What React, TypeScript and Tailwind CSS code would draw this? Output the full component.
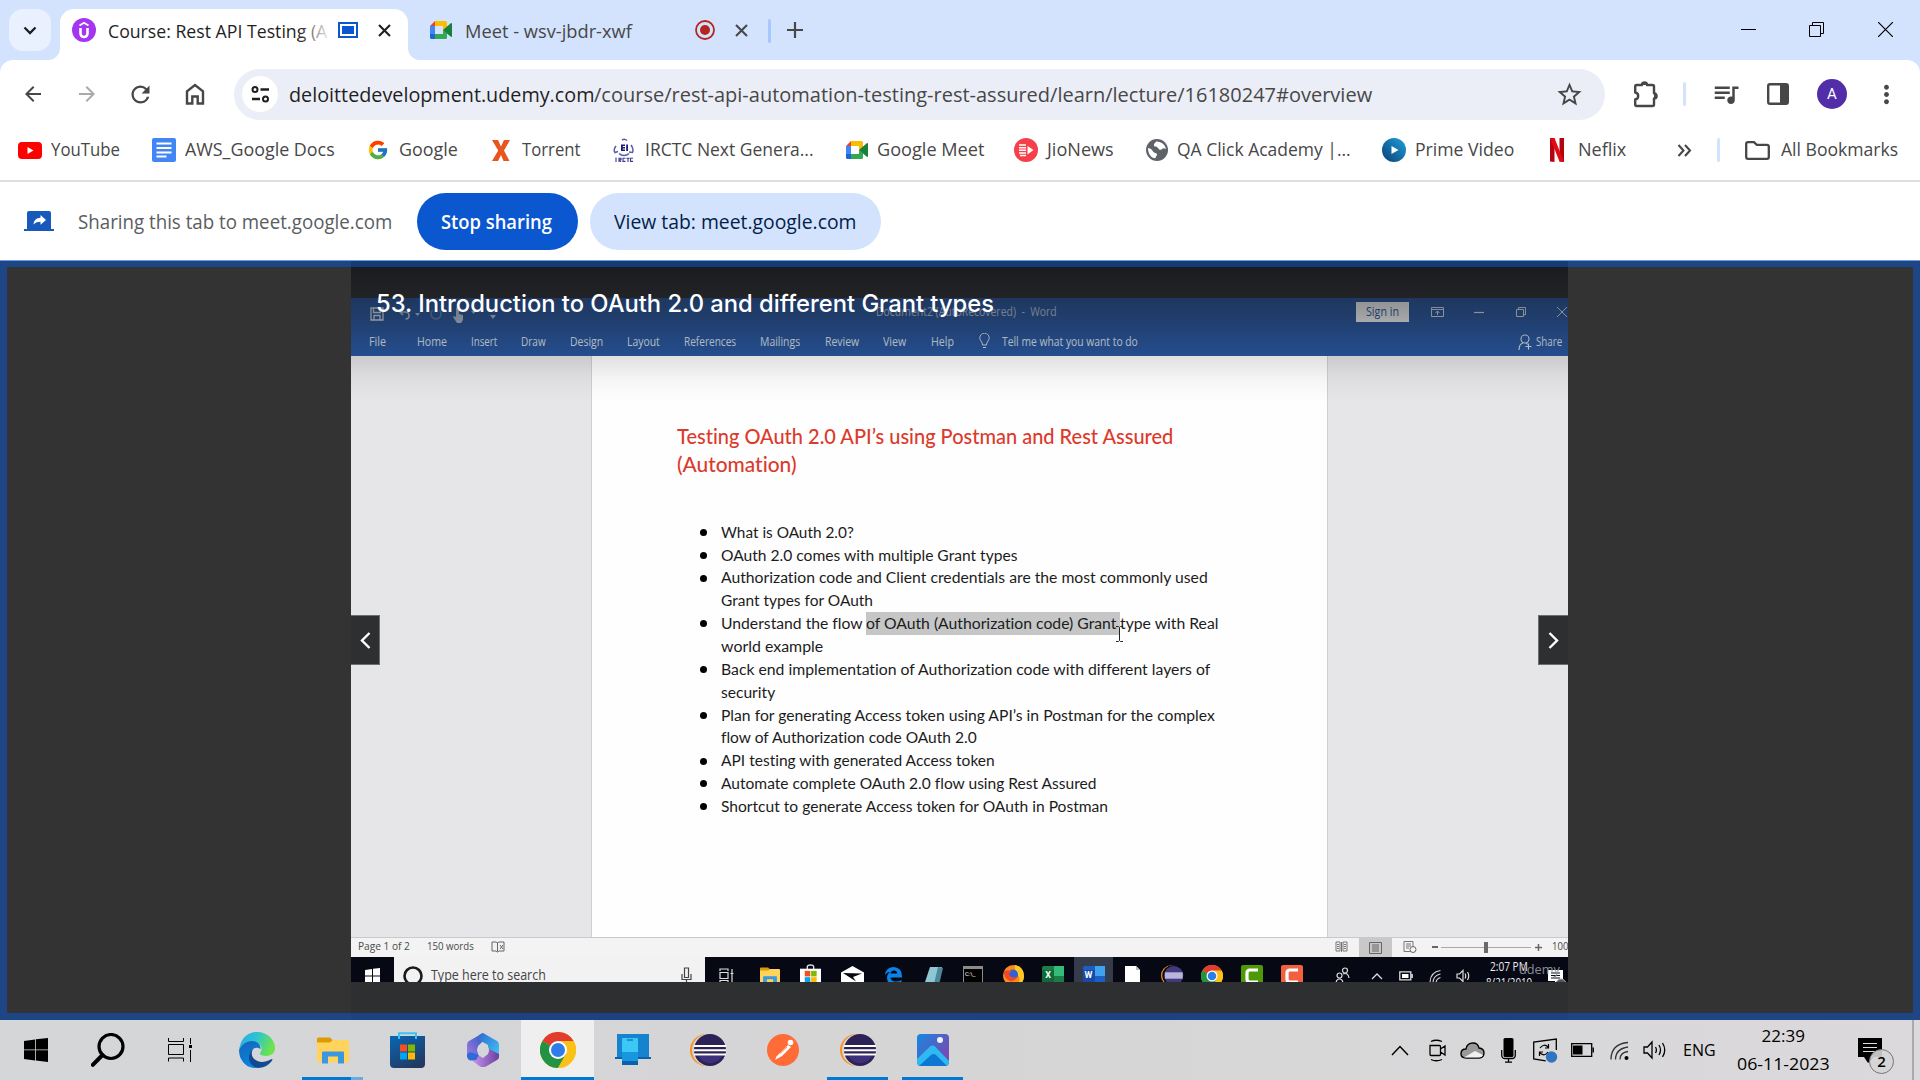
import React, { useLayoutEffect, useRef, useState } from "react";
import { FcGoogle } from "react-icons/fc";
import {
  MdArrowBack,
  MdArrowForward,
  MdRefresh,
  MdMoreVert,
  MdQueueMusic,
  MdStarBorder,
} from "react-icons/md";

type Kids = { children?: React.ReactNode; className?: string };

/* Single line of text stretched or condensed to a fixed advance width. */
function Fit({ w, className = "", children }: Kids & { w: number }) {
  const ref = useRef<HTMLSpanElement>(null);
  const [scale, setScale] = useState(1);
  useLayoutEffect(() => {
    if (ref.current && ref.current.offsetWidth) setScale(w / ref.current.offsetWidth);
  }, [w]);
  return (
    <span className={"inline-block shrink-0 " + className} style={{ width: w }}>
      <span
        ref={ref}
        className="inline-block origin-left whitespace-pre"
        style={{ transform: `scaleX(${scale})` }}
      >
        {children}
      </span>
    </span>
  );
}

function Svg({
  w,
  h,
  vb,
  className = "",
  children,
}: Kids & { w: number; h: number; vb?: string }) {
  return (
    <svg
      width={w}
      height={h}
      viewBox={vb ?? `0 0 ${w} ${h}`}
      fill="none"
      className={"block shrink-0 " + className}
    >
      {children}
    </svg>
  );
}

/* ---------- logos ---------- */

const MeetLogo = () => (
  <Svg w={22} h={18} vb="0 0 22 18">
    <path d="M0 5 5 0v5z" fill="#ea4335" />
    <path d="M5 0h10.5Q17 0 17 1.500V7l-4 3V5H5z" fill="#fbbc04" />
    <path d="M0 5h5v8H0z" fill="#4285f4" />
    <path d="M0 13h5v5H1.500Q0 18 0 16.500z" fill="#1967d2" />
    <path d="M5 13h8V9l4 3v4.500q0 1.500-1.500 1.500H5z" fill="#34a853" />
    <path d="m13 9 7.500-6.500Q22 1.500 22 3v12q0 1.500-1.500.500z" fill="#188038" />
  </Svg>
);

const Chrome = ({ s }: { s: number }) => (
  <Svg w={s} h={s} vb="0 0 36 36">
    <circle cx="18" cy="18" r="18" fill="#fbc116" />
    <path d="M18 18 2.400 9A18 18 0 0 1 33.600 9z" fill="#e33b2e" />
    <path d="M2.400 9A18 18 0 0 0 18 36l7.800-13.500L18 18z" fill="#229342" />
    <path d="M18 9h15.600A18 18 0 0 1 18 36l7.800-13.500z" fill="#fbc116" />
    <circle cx="18" cy="18" r="9" fill="#fff" />
    <circle cx="18" cy="18" r="7" fill="#2f7de9" />
  </Svg>
);

const Eclipse = ({ s }: { s: number }) => (
  <Svg w={s} h={s} vb="0 0 36 36">
    <circle cx="16" cy="18" r="16" fill="#f7941e" />
    <circle cx="18" cy="18" r="16" fill="#d5d6d8" />
    <circle cx="20" cy="18" r="16" fill="#2c2255" />
    <path d="M8 24h24c-3 5-7 7-12 7s-9-2-12-7z" fill="#43388a" opacity=".7" />
    <path d="M4 13h32v2H4zM4 17.200h32v2H4zM4 21.400h32v2H4z" fill="#fff" />
  </Svg>
);

const Explorer = ({ w, h }: { w: number; h: number }) => (
  <Svg w={w} h={h} vb="0 0 32 26">
    <path d="M0 1.500Q0 0 1.500 0H13l3 3-3 3H0z" fill="#dd9a05" />
    <path d="M0 5h13l3-2.500h14.500Q32 2.500 32 4v19.500q0 1.500-1.500 1.500h-29Q0 25 0 23.500z" fill="#ffd35c" />
    <path d="M5 26V15q0-1 1-1h20q1 0 1 1v11h-6v-7H11v7z" fill="#3a97e0" />
  </Svg>
);

const StoreTiles = () => (
  <>
    <path d="M10 12.500h7v7h-7z" fill="#f25022" />
    <path d="M18 12.500h7v7h-7z" fill="#7fba00" />
    <path d="M10 20.500h7v7h-7z" fill="#00a4ef" />
    <path d="M18 20.500h7v7h-7z" fill="#ffb900" />
  </>
);

/* ---------- browser chrome ---------- */

const Close = ({ className = "" }: Kids) => (
  <Svg w={13} h={13} className={className}>
    <path d="m1 1 11 11M12 1 1 12" stroke="currentColor" strokeWidth="2.100" />
  </Svg>
);

function TabStrip() {
  return (
    <div className="flex h-[60px] bg-[#d3e3fd] pl-[9px] pt-[9px] text-[#1f1f1f]">
      <div className="flex size-[42px] items-center justify-center rounded-[14px] bg-[#e9f1fe]">
        <Svg w={14} h={9}>
          <path d="m1.500 1.500 5.500 5.500 5.500-5.500" stroke="#1f1f1f" strokeWidth="2.300" />
        </Svg>
      </div>

      <div className="relative ml-[9px] flex h-[51px] w-[348px] rounded-t-[14px] bg-white pl-3">
        <span className="absolute -left-3 bottom-0 size-3 bg-white">
          <span className="block size-3 rounded-br-[12px] bg-[#d3e3fd]" />
        </span>
        <span className="absolute -right-3 bottom-0 size-3 bg-white">
          <span className="block size-3 rounded-bl-[12px] bg-[#d3e3fd]" />
        </span>
        <Svg w={24} h={24} className="mt-[9px]">
          <circle cx="12" cy="12" r="12" fill="#a435f0" />
          <path d="M7.500 7.500 12 4.800l4.500 2.700" stroke="#fff" strokeWidth="1.900" />
          <path d="M8.500 10v5.500a3.500 3.500 0 0 0 7 0V10" stroke="#fff" strokeWidth="2.600" />
        </Svg>
        <div className="relative ml-3 h-[42px] w-[219px] pt-[10px] text-[17.300px] leading-[26px]">
          <Fit w={219}>Course: Rest API Testing (A</Fit>
          <span className="absolute -right-1 top-0 h-10 w-8 bg-gradient-to-r from-transparent to-white" />
        </div>
        <Svg w={20} h={16} className="ml-[11px] mt-[13px]">
          <path d="M1 1h18v14H1z" stroke="#0b57d0" strokeWidth="2" />
          <path d="M4 4h12v8H4z" fill="#0b57d0" />
        </Svg>
        <Close className="ml-[20px] mt-[15px]" />
      </div>

      <div className="ml-[22px] mt-3">
        <MeetLogo />
      </div>
      <Fit w={167} className="ml-[13px] mt-[10px] text-[17.300px] leading-[26px] text-[#474747]">
        Meet - wsv-jbdr-xwf
      </Fit>
      <Svg w={20} h={20} className="ml-[63px] mt-[11px]">
        <circle cx="10" cy="10" r="9" stroke="#b3261e" strokeWidth="1.800" />
        <circle cx="10" cy="10" r="5" fill="#b3261e" />
      </Svg>
      <Close className="ml-[20px] mt-[15px] text-[#474747]" />
      <span className="ml-[20px] mt-[10px] h-6 w-[3px] rounded bg-[#a8c7fa]" />
      <Svg w={16} h={16} className="ml-[16px] mt-[13px]">
        <path d="M8 0v16M0 8h16" stroke="#474747" strokeWidth="2.200" />
      </Svg>
      <div className="ml-auto mr-[27px] flex text-black">
        <Svg w={15} h={15} className="mt-[13px]">
          <path d="M0 7.500h15" stroke="currentColor" />
        </Svg>
        <Svg w={15} h={15} className="ml-[53px] mt-[13px]">
          <path d="M.5 3.500h11v11H.5zM3.500 3.500v-3h11v11h-3" stroke="currentColor" />
        </Svg>
        <Svg w={15} h={15} className="ml-[54px] mt-[13px]">
          <path d="m0 0 15 15M15 0 0 15" stroke="currentColor" strokeWidth="1.200" />
        </Svg>
      </div>
    </div>
  );
}

function Toolbar() {
  return (
    <div className="h-[60px] bg-[#d3e3fd]">
      <div className="flex h-[60px] items-center rounded-t-[13px] bg-white pl-[21px] pt-[8px] text-[#474747]">
        <MdArrowBack className="size-6 shrink-0" />
        <MdArrowForward className="ml-[30px] size-6 shrink-0 text-[#aaaaaa]" />
        <MdRefresh className="ml-[28px] size-[27px] shrink-0" />
        <Svg w={20} h={22} className="ml-[31px]">
          <path d="M2 20.500V8.300L10 2l8 6.300v12.200h-5.300v-7H7.300v7z" stroke="currentColor" strokeWidth="2.400" />
        </Svg>
        <div className="ml-[29px] flex h-[51px] w-[1371px] shrink-0 items-center rounded-full bg-[#ebeef7] pl-2">
          <span className="flex size-9 shrink-0 items-center justify-center rounded-full bg-white">
            <Svg w={19} h={17}>
              <circle cx="4" cy="3.500" r="2.500" stroke="#1f1f1f" strokeWidth="2" />
              <path d="M9.500 3.500H18M1 13h8" stroke="#1f1f1f" strokeWidth="2.300" />
              <circle cx="14.500" cy="13" r="2.500" stroke="#1f1f1f" strokeWidth="2" />
            </Svg>
          </span>
          <Fit w={305} className="ml-[11px] text-[20.300px] leading-[30px] text-[#1f1f1f]">
            deloittedevelopment.udemy.com
          </Fit>
          <Fit w={778} className="text-[20.300px] leading-[30px]">
            /course/rest-api-automation-testing-rest-assured/learn/lecture/16180247#overview
          </Fit>
          <MdStarBorder className="ml-[183px] size-[29px] shrink-0" />
        </div>
        <Svg w={26} h={27} className="ml-[28px]">
          <path
            d="M2.200 5.500q0-1.500 1.500-1.500H9a2.500 2.500 0 0 1 5 0h5.500q1.500 0 1.500 1.500v6.800a2.600 2.600 0 0 1 0 5.200v6q0 1.500-1.500 1.500H3.700q-1.500 0-1.500-1.500V18.500c4-.500 4-6.500 0-7z"
            stroke="currentColor"
            strokeWidth="2.400"
            strokeLinejoin="round"
          />
          <path d="M9 4a2.600 2.600 0 0 1 5 0zM21 12a2.600 2.600 0 0 1 0 5.500z" fill="currentColor" />
        </Svg>
        <span className="ml-[24px] h-6 w-[3px] rounded bg-[#d3e3fd]" />
        <MdQueueMusic className="ml-[25px] size-[30px] shrink-0" />
        <Svg w={22} h={22} className="ml-[26px]">
          <path d="M1.200 3q0-1.800 1.800-1.800h16q1.800 0 1.800 1.800v16q0 1.800-1.800 1.800H3q-1.800 0-1.800-1.800z" stroke="currentColor" strokeWidth="2.400" />
          <path d="M13 1h8v20h-8z" fill="currentColor" />
        </Svg>
        <span className="ml-[28px] flex size-[30px] shrink-0 items-center justify-center rounded-full bg-[#512da8] font-[Roboto] text-[15px] text-white">
          A
        </span>
        <MdMoreVert className="ml-[25px] size-[29px] shrink-0" />
      </div>
    </div>
  );
}

const BM = ({ icon, gap, ml, w, label }: { icon: React.ReactNode; gap: string; ml: string; w: number; label: string }) => (
  <div className={"flex shrink-0 items-center " + ml}>
    {icon}
    <Fit w={w} className={gap}>
      {label}
    </Fit>
  </div>
);

function Bookmarks() {
  return (
    <div className="flex h-[62px] items-center border-b-2 border-[#dedfe0] bg-white text-[17.300px] leading-[26px] text-[#474747]">
      <BM
        ml="ml-[18px]"
        gap="ml-[9px]"
        w={69}
        label="YouTube"
        icon={
          <Svg w={24} h={17}>
            <rect width="24" height="17" rx="4" fill="#f00" />
            <path d="m9.500 5 6 3.500-6 3.500z" fill="#fff" />
          </Svg>
        }
      />
      <BM
        ml="ml-[32px]"
        gap="ml-[9px]"
        w={150}
        label="AWS_Google Docs"
        icon={
          <Svg w={24} h={24}>
            <rect width="24" height="24" rx="2" fill="#4285f4" />
            <path d="M4.500 5.500h15M4.500 10h15M4.500 14.500h15M4.500 18.500h10" stroke="#fff" strokeWidth="2" />
          </Svg>
        }
      />
      <BM ml="ml-[32px]" gap="ml-[10px]" w={59} label="Google" icon={<FcGoogle className="size-[22px]" />} />
      <BM
        ml="ml-[34px]"
        gap="ml-[12px]"
        w={59}
        label="Torrent"
        icon={
          <Svg w={18} h={21}>
            <path d="M0 0h6l3 6.500L12 0h6l-6 10.500L17.500 21h-6L9 15l-3 6H0l6.200-10.500z" fill="#e8551f" />
          </Svg>
        }
      />
      <BM
        ml="ml-[32px]"
        gap="ml-[10px]"
        w={169}
        label="IRCTC Next Genera..."
        icon={
          <Svg w={22} h={24}>
            <path d="M9 2a4 4 0 0 1 5 .5M3 8q-3 4-1 6.500l3-1M18 7q3 4 1.500 7.500L16 14M6 15.500q2 2 5 2t5-2" stroke="#5a5ab0" strokeWidth="1.500" />
            <path d="M8 6.500h4v1.600H9.800v1H12v1.400H9.800v1H12V13H8zM13.200 6.500h1.800V13h-1.800z" fill="#1d1d7a" />
            <path d="M3 19.500V24M6 24v-3.800h2v1.600H6.500L8 24M12.500 20.200H10v3.200h2.500M13.500 20.200h3M15 20.200V24M20 20.200h-2.500v3.200H20" stroke="#3a3a90" strokeWidth="1.100" />
          </Svg>
        }
      />
      <BM ml="ml-[32px]" gap="ml-[9px]" w={107} label="Google Meet" icon={<MeetLogo />} />
      <BM
        ml="ml-[30px]"
        gap="ml-[9px]"
        w={67}
        label="JioNews"
        icon={
          <Svg w={24} h={24}>
            <circle cx="12" cy="12" r="12" fill="#f5404b" />
            <path d="M5 7h7M5 9.700h7M5 12.300h7M5 15h7M6 17.500h6" stroke="#fff" strokeWidth="1.500" />
            <path d="m13.500 8 6 4-6 4.500z" fill="#fff" />
          </Svg>
        }
      />
      <BM
        ml="ml-[32px]"
        gap="ml-[9px]"
        w={174}
        label="QA Click Academy |..."
        icon={
          <Svg w={22} h={22}>
            <circle cx="11" cy="11" r="11" fill="#5f6368" />
            <path d="M2 9c3 .5 4 1.500 5 3.500s4 1 4 3-1.500 1.500-1.500 3.800C5 19 2 15 2 9zM10 2.500c-1 2-2.500 2-2 4s3 .5 4 2.500 3 2.500 4 1 2.500-.5 4 0c-.5-4-5-8-10-7.500z" fill="#fff" />
          </Svg>
        }
      />
      <BM
        ml="ml-[31px]"
        gap="ml-[9px]"
        w={99}
        label="Prime Video"
        icon={
          <Svg w={24} h={24}>
            <defs>
              <linearGradient id="pv" x1="1" y1="0" x2="0" y2="1">
                <stop offset="0" stopColor="#1fa0dc" />
                <stop offset="1" stopColor="#0a3f74" />
              </linearGradient>
            </defs>
            <circle cx="12" cy="12" r="12" fill="url(#pv)" />
            <path d="m9.500 8 7 4-7 4z" fill="#fff" />
          </Svg>
        }
      />
      <BM
        ml="ml-[36px]"
        gap="ml-[14px]"
        w={48}
        label="Neflix"
        icon={
          <Svg w={14} h={24}>
            <path d="M0 0h4.500v24L0 23.500zM9.500 0H14v24l-4.500-.5z" fill="#b1060f" />
            <path d="M0 0h4.500L14 24l-4.500-.5z" fill="#e50914" />
          </Svg>
        }
      />
      <Svg w={15} h={13} className="ml-[51px]">
        <path d="m1.500 1 5 5.500-5 5.500M8 1l5 5.500L8 12" stroke="#474747" strokeWidth="2.100" />
      </Svg>
      <span className="ml-[25px] h-6 w-[3px] rounded bg-[#d3e3fd]" />
      <Svg w={25} h={19} className="ml-[25px]">
        <path d="M1.200 3q0-1.800 1.800-1.800h6l2.800 2.600H22q1.800 0 1.800 1.800V16q0 1.800-1.800 1.800H3Q1.200 17.800 1.200 16z" stroke="#474747" strokeWidth="2.300" />
      </Svg>
      <Fit w={117} className="ml-[11px]">
        All Bookmarks
      </Fit>
    </div>
  );
}

function ShareBar() {
  return (
    <div className="flex h-[78px] items-center bg-white pl-6 text-[19.200px] leading-[28px]">
      <Svg w={30} h={20}>
        <path d="M3 2q0-2 2-2h20q2 0 2 2v16h3v2H0v-2h3z" fill="#185abc" />
        <path d="M9.500 13.500c.5-4.500 3-6.300 7-6.700V4l5.500 5-5.500 4.800v-3c-3 0-5 .7-7 2.700z" fill="#fff" />
      </Svg>
      <Fit w={314} className="ml-6 mt-px text-[#5a5d61]">
        Sharing this tab to meet.google.com
      </Fit>
      <div className="ml-[25px] flex h-[57px] w-[161px] items-center rounded-full bg-[#0b57d0] pl-6 pt-[2px] font-semibold text-white">
        <Fit w={111}>Stop sharing</Fit>
      </div>
      <div className="ml-3 flex h-[57px] w-[291px] items-center rounded-full bg-[#d3e3fd] pl-6 pt-[2px] font-medium text-[#041e49]">
        <Fit w={242}>View tab: meet.google.com</Fit>
      </div>
    </div>
  );
}

/* ---------- recorded Word window ---------- */

const ribbon: [string, string, number][] = [
  ["File", "ml-[18px]", 17],
  ["Home", "ml-[31px]", 30],
  ["Insert", "ml-[24px]", 26],
  ["Draw", "ml-[24px]", 25],
  ["Design", "ml-[24px]", 33],
  ["Layout", "ml-[24px]", 33],
  ["References", "ml-[24px]", 52],
  ["Mailings", "ml-[24px]", 40],
  ["Review", "ml-[25px]", 34],
  ["View", "ml-[24px]", 23],
  ["Help", "ml-[25px]", 23],
];

function WordHeader() {
  return (
    <div className="flex h-[58px] flex-col bg-[#2756a0] text-[12px] text-[#dfe6f2]">
      <div className="flex h-7 items-center">
        <Svg w={14} h={14} className="ml-[19px] mt-[4px]">
          <path d="M1 1h12v12H1zM3.500 1v4.500h7V1M4 13V8.500h6V13" stroke="currentColor" strokeWidth="1.300" />
        </Svg>
        <Svg w={22} h={12} className="ml-[14px] mt-[4px] opacity-80">
          <path d="M5 1 2 4l3 3M2 4h5q4 0 4 3.500T7.500 11" stroke="currentColor" strokeWidth="1.600" />
          <path d="m17 5 2.500 3L22 5z" fill="currentColor" />
        </Svg>
        <Svg w={12} h={13} className="ml-[10px] mt-[4px] opacity-30">
          <path d="M9 2a5 5 0 1 1-6 0" stroke="currentColor" strokeWidth="1.500" />
        </Svg>
        <Svg w={24} h={17} className="ml-[10px] mt-[5px] opacity-80">
          <path d="M4 2q2-2 3 0v6l4 1v5l-2 3H5L1 11l1-1 2 1z" fill="currentColor" />
          <path d="m19 5 2.500 3L24 5z" fill="currentColor" />
        </Svg>
        <Svg w={6} h={5} className="ml-[14px] mt-[8px] opacity-80">
          <path d="M0 1h6L3 5z" fill="currentColor" />
        </Svg>
        <Fit w={181} className="ml-[380px] opacity-80">
          Document2 (AutoRecovered)  -  Word
        </Fit>
        <span className="ml-[299px] flex h-[20px] w-[53px] items-center justify-center bg-white text-[#2756a0]">
          <Fit w={33}>Sign in</Fit>
        </span>
        <Svg w={13} h={10} className="ml-[22px]">
          <path d="M.5.500h12v9H.5zM0 2.500h13M6.500 8V4M4.500 6l2-2 2 2" stroke="currentColor" />
        </Svg>
        <Svg w={10} h={10} className="ml-[30px]">
          <path d="M0 5.500h10" stroke="currentColor" strokeWidth="1.200" />
        </Svg>
        <Svg w={10} h={10} className="ml-[32px]">
          <path d="M.5 2.500h7v7h-7zM2.500 2V.5h7v7H8" stroke="currentColor" />
        </Svg>
        <Svg w={10} h={10} className="ml-[31px]">
          <path d="m0 0 10 10M10 0 0 10" stroke="currentColor" />
        </Svg>
      </div>
      <div className="flex h-[30px] items-center pt-[1px]">
        {ribbon.map(([t, ml, w]) => (
          <Fit key={t} w={w} className={ml}>
            {t}
          </Fit>
        ))}
        <Svg w={11} h={17} className="ml-[25px]">
          <path d="M3.500 12q0-2-1.500-4a4.700 4.700 0 1 1 7 0Q7.500 10 7.500 12zM4 14.500h3" stroke="currentColor" />
        </Svg>
        <Fit w={136} className="ml-[12px]">
          Tell me what you want to do
        </Fit>
        <Svg w={14} h={16} className="ml-[380px]">
          <circle cx="7" cy="5" r="4" stroke="currentColor" strokeWidth="1.100" />
          <path d="M1 16q0-6 4-7M8 9.500q1.500 0 2.500 1.500M10.500 9.500v6M7.500 12.500h6" stroke="currentColor" strokeWidth="1.100" />
        </Svg>
        <Fit w={26} className="ml-[4px]">
          Share
        </Fit>
      </div>
    </div>
  );
}

const lines: { t: string; w: number; b?: boolean }[] = [
  { t: "What is OAuth 2.0?", w: 133, b: true },
  { t: "OAuth 2.0 comes with multiple Grant types", w: 296, b: true },
  { t: "Authorization code and Client credentials are the most commonly used", w: 487, b: true },
  { t: "Grant types for OAuth", w: 152 },
  { t: "", w: 0, b: true },
  { t: "world example", w: 102 },
  { t: "Back end implementation of Authorization code with different layers of", w: 489, b: true },
  { t: "security", w: 54 },
  { t: "Plan for generating Access token using API’s in Postman for the complex", w: 494, b: true },
  { t: "flow of Authorization code OAuth 2.0", w: 256 },
  { t: "API testing with generated Access token", w: 274, b: true },
  { t: "Automate complete OAuth 2.0 flow using Rest Assured", w: 376, b: true },
  { t: "Shortcut to generate Access token for OAuth in Postman", w: 387, b: true },
];

function WordDocument() {
  return (
    <div className="flex h-[581px] bg-[#e6e6e8]">
      <div className="ml-[240px] w-[737px] border-x border-[#cfcfd0] bg-[#fefefe] pt-[66px] font-[Lato] [font-variant-ligatures:none]">
        <div className="flex flex-col pl-[85px] text-[20.500px] font-medium leading-[28px] text-[#dc3a2c]">
          <Fit w={496}>Testing OAuth 2.0 API’s using Postman and Rest Assured</Fit>
          <Fit w={119}>(Automation)</Fit>
        </div>
        <div className="mt-[43px] text-[15.600px] text-[#1c1c1c]">
          {lines.map((l, i) => (
            <div key={i} className="flex h-[22.870px] items-center">
              <span className={l.b ? "ml-[108px] size-[7px] rounded-full bg-black" : "ml-[108px] size-[7px]"} />
              {l.t ? (
                <Fit w={l.w} className="ml-[14px]">
                  {l.t}
                </Fit>
              ) : (
                <>
                  <Fit w={142} className="ml-[14px]">
                    Understand the flow
                  </Fit>
                  <span className="relative ml-[3px] flex h-[23px] w-[254px] items-center bg-[#c6c6c7]">
                    <Fit w={250}>of OAuth (Authorization code) Grant</Fit>
                    <Svg w={7} h={16} className="absolute -right-[3px] top-[14px]">
                      <path d="M0 .5h2.500l1 1 1-1H7M3.500 1.500v13M0 15.500h2.500l1-1 1 1H7" stroke="#222" />
                    </Svg>
                  </span>
                  <Fit w={98}>type with Real</Fit>
                </>
              )}
            </div>
          ))}
        </div>
      </div>
    </div>
  );
}

function WordStatus() {
  return (
    <div className="flex h-5 shrink-0 items-center border-t border-[#c9c9c9] bg-[#f3f3f3] pb-px text-[11.300px] text-[#4a4a4a]">
      <Fit w={52} className="-mt-px ml-[7px]">
        Page 1 of 2
      </Fit>
      <Fit w={47} className="-mt-px ml-[17px]">
        150 words
      </Fit>
      <Svg w={14} h={12} className="ml-[17px]">
        <path d="M6.500 1.500v9M1 1h4l1.500 1L8 1h5v9H8l-1.500 1L5 10H1zM9 4l3 4M12 4 9 8" stroke="#666" />
      </Svg>
      <Svg w={13} h={12} className="ml-[830px]">
        <path d="M6.500 1v10M1 1h4v9H1zM8 1h4v9H8zM2 3.500h2M2 5.500h2M2 7.500h2M9 3.500h2M9 5.500h2M9 7.500h2" stroke="#777" />
      </Svg>
      <span className="-mb-px ml-[11px] flex h-[19px] w-[34px] items-center justify-center bg-[#c8c8c8]">
        <Svg w={13} h={12}>
          <path d="M.5.500h12v11H.5zM3 3h7M3 5h7M3 7h7M3 9h7" stroke="#666" />
        </Svg>
      </span>
      <Svg w={14} h={12} className="ml-[11px]">
        <path d="M1 .5h9v10H1zM3 3h5M3 5h5M3 7h3" stroke="#777" />
        <circle cx="10" cy="8.500" r="3" fill="#f3f3f3" stroke="#666" />
      </Svg>
      <span className="ml-[15px] h-[2px] w-[6px] bg-[#666]" />
      <span className="ml-[3px] flex h-full w-[90px] items-center justify-center">
        <span className="h-px w-[43px] bg-[#aaa]" />
        <span className="h-[11px] w-[4px] bg-[#6a6a6a]" />
        <span className="h-px w-[43px] bg-[#aaa]" />
      </span>
      <Svg w={7} h={7} className="ml-[4px]">
        <path d="M0 3.500h7M3.500 0v7" stroke="#666" strokeWidth="1.500" />
      </Svg>
      <Fit w={16} className="-mt-px ml-[10px]">
        100
      </Fit>
    </div>
  );
}

const OfficeTile = ({ letter, a, b, c }: { letter: string; a: string; b: string; c: string }) => (
  <span className={"flex h-[20px] w-[22px] items-center rounded-[2px] " + a}>
    <span className={"flex size-[12px] items-center justify-center font-[Roboto] text-[9px] font-bold leading-none text-white " + b}>
      {letter}
    </span>
    <span className={"h-[10px] w-[10px] self-start " + c} />
  </span>
);

const Camtasia = ({ className }: Kids) => (
  <span className={"flex size-[22px] shrink-0 items-center justify-center rounded-[2px] " + className}>
    <Svg w={14} h={16}>
      <path d="M13 2H5Q2 2 2 5v6q0 3 3 3h8" stroke="#fff" strokeWidth="3.200" />
    </Svg>
  </span>
);

function RecordedTaskbar() {
  return (
    <div className="relative h-[25px] shrink-0 overflow-hidden bg-[#060914]">
      <div className="flex h-[37px] items-center text-white">
        <Svg w={15} h={16} className="ml-[14px]">
          <path d="m0 2 7-1v6.500H0zM8 .800 15 0v7.500H8zM0 8.500h7V15l-7-1zM8 8.500h7V16l-7-1z" fill="#fff" />
        </Svg>
        <div className="ml-[14px] flex h-full w-[311px] items-center bg-[#f2f2f3] pl-[9px] text-[#444]">
          <Svg w={20} h={20}>
            <circle cx="10" cy="10" r="8.500" stroke="#1a1a1a" strokeWidth="2.600" />
          </Svg>
          <Fit w={115} className="-mt-px ml-[8px] text-[14px] leading-[18px]">
            Type here to search
          </Fit>
          <Svg w={11} h={17} className="ml-[135px]">
            <path d="M3.500 1h4v9.500h-4zM1 7v5.500h9V7M5.500 13v4" stroke="#444" strokeWidth="1.200" />
          </Svg>
        </div>
        <Svg w={15} h={16} className="ml-[14px]">
          <path d="M1 3V1h8v2M1 4.500h8v6H1zM1 15v-2.500h8V15M13 1v14M11.500 5.500h3" stroke="#ddd" strokeWidth="1.200" />
        </Svg>
        <div className="ml-[26px]">
          <Explorer w={20} h={19} />
        </div>
        <Svg w={21} h={24} vb="6 6 23 26" className="ml-[20px]">
          <path d="M14 12V9q0-2 3.500-2T21 9v3" stroke="#ddd" strokeWidth="1.500" />
          <path d="M6 11h23v20H6z" fill="#fff" />
          <g transform="translate(2.500 2.500) scale(.87)">
            <StoreTiles />
          </g>
        </Svg>
        <Svg w={23} h={19} className="ml-[20px]">
          <path d="M0 6.500 11.500 0 23 6.500V19H0z" fill="#fff" />
          <path d="m2 7 19 .5-9 3.500 3 4.500z" fill="#060914" />
        </Svg>
        <Svg w={19} h={20} className="ml-[20px]">
          <path d="M1 9Q2 1 10 1q8 1 8 9v1.500H6.500q.5 4 5 4 3.500 0 6-1.500v4q-3 2-7 2-7-1-7.500-8 0-4 3-6Q3.500 5.500 1 9zm5.500-1.500h6.800Q13 4.500 10 4.500t-3.500 3z" fill="#0a84e8" />
        </Svg>
        <Svg w={20} h={20} className="ml-[20px]">
          <path d="M7 1h12l-5 18H1z" fill="#8fc6d4" />
          <path d="m15 1 5 1-4 17-5-1z" fill="#4b8797" />
        </Svg>
        <span className="ml-[20px] flex h-[20px] w-[20px] shrink-0 flex-col border border-t-[3px] border-[#8b8b8b] bg-black pl-px pt-[2px] font-[Roboto] text-[6px] leading-none">
          C:\_
        </span>
        <Svg w={21} h={21} className="ml-[20px]">
          <circle cx="10.500" cy="10.500" r="10.500" fill="#ff8a1c" />
          <path d="M12 0q9 2 9 11t-9 10q6-4 4-9t-4-6z" fill="#ffc828" />
          <circle cx="10" cy="9.500" r="5" fill="#2f62d3" />
          <path d="M1 6q5-2 8 1l-3 1 1 3q4 3 8 0-3 6-8 5-7-3-6-10z" fill="#ee4a2a" />
        </Svg>
        <span className="ml-[18px]">
          <OfficeTile letter="X" a="bg-[#1c7d46]" b="bg-[#0f6a38]" c="bg-[#34bb7a]" />
        </span>
        <span className="ml-[10px] flex h-full w-[39px] items-center justify-center bg-[#363b4b]">
          <OfficeTile letter="W" a="bg-[#1c5fc4]" b="bg-[#1949a8]" c="bg-[#3fa2ee]" />
        </span>
        <Svg w={15} h={20} className="ml-[12px]">
          <path d="M0 0h11l4 4v16H0z" fill="#fff" />
          <path d="M11 0v4h4z" fill="#bbb" />
        </Svg>
        <Svg w={23} h={23} vb="0 0 36 36" className="ml-[21px]">
          <circle cx="16" cy="18" r="16" fill="#f7941e" />
          <circle cx="18" cy="18" r="16" fill="#060914" />
          <circle cx="20" cy="18" r="15" fill="#43397c" />
          <path d="M6 13h28v10H6z" fill="#b9b5dc" />
        </Svg>
        <span className="ml-[17px]">
          <Chrome s={22} />
        </span>
        <Camtasia className="ml-[18px] bg-[#4e9a06]" />
        <Camtasia className="ml-[18px] bg-[#f2603f]" />
        <Svg w={15} h={18} className="ml-[32px]">
          <circle cx="10" cy="3.500" r="2.500" stroke="#ddd" strokeWidth="1.200" />
          <circle cx="4.500" cy="8.500" r="2.500" stroke="#ddd" strokeWidth="1.200" />
          <path d="M1 17q0-5 3.500-5T8 17M8 7q5-2 6 4" stroke="#ddd" strokeWidth="1.200" />
        </Svg>
        <Svg w={12} h={8} className="ml-[21px]">
          <path d="m1 7 5-5 5 5" stroke="#ddd" strokeWidth="1.300" />
        </Svg>
        <Svg w={14} h={10} className="ml-[16px]">
          <path d="M.8.800h11v8H.800zM13.200 3v4" stroke="#ddd" strokeWidth="1.300" />
          <path d="M3 3h6.500v4H3z" fill="#fff" />
        </Svg>
        <Svg w={12} h={14} className="ml-[16px]">
          <path d="M1 14Q1 3 11.500 1.500M4 14q0-7.500 7.500-9M7 14q0-4 4.500-5.500" stroke="#ccc" strokeWidth="1.200" />
        </Svg>
        <Svg w={15} h={14} className="ml-[15px]">
          <path d="M1 5h2.500L7 1.500v11L3.500 9H1zM9 4.500q1.500 2.500 0 5M11.500 3q2.500 4 0 8" stroke="#ddd" strokeWidth="1.200" />
        </Svg>
        <div className="ml-[15px] flex w-[46px] shrink-0 flex-col items-center self-start text-[12.500px] leading-[16px] text-[#eee]">
          <Fit w={38} className="mt-[2px]">
            2:07 PM
          </Fit>
          <Fit w={46}>8/21/2019</Fit>
        </div>
        <Svg w={20} h={18} className="ml-[16px] mt-[6px]">
          <path d="M0 0h15v11h-5l-3 4v-4H0z" fill="#fff" />
          <path d="M3 3h9M3 5.500h9M3 8h9" stroke="#060914" />
          <circle cx="13" cy="14" r="5" fill="#555" stroke="#aaa" />
        </Svg>
      </div>
      <span className="absolute left-[1168px] top-[4px] text-[13px] leading-[16px] text-[#8b8d94]">
        <Fit w={41}>ûdemy</Fit>
      </span>
    </div>
  );
}

function Stage() {
  return (
    <div className="flex h-[760px] flex-col border-t border-[#6f9bd8] bg-[#333333]">
      <div className="flex h-[6px] shrink-0 bg-[#1e4585]">
        <div className="ml-[351px] w-[1217px] bg-[#123b78]" />
      </div>
      <div className="flex h-[746px] shrink-0 border-x-[7px] border-[#1e4585]">
        <div className="relative ml-[344px] flex w-[1217px] flex-col overflow-hidden bg-[#2d2f31] pt-[31px]">
          <WordHeader />
          <WordDocument />
          <WordStatus />
          <RecordedTaskbar />
          <div className="absolute inset-x-0 top-0 h-[135px] bg-[linear-gradient(to_bottom,rgba(5,5,12,.46)_0px,rgba(20,22,26,.48)_31px,rgba(22,24,28,.4)_50px,rgba(20,20,20,.13)_89px,rgba(20,20,20,.04)_112px,rgba(20,20,20,0)_135px)]" />
          <div className="absolute left-[25px] top-[21px] font-[Inter] text-[24px] font-medium leading-[32px] text-white">
            <Fit w={618}>53. Introduction to OAuth 2.0 and different Grant types</Fit>
          </div>
          <button className="absolute left-0 top-[348px] flex h-[50px] w-[29px] items-center justify-center border-y border-r border-[#6a6f73] bg-[#2d2f31]">
            <Svg w={11} h={17}>
              <path d="M9.500 1 2 8.500 9.500 16" stroke="#fff" strokeWidth="2.400" />
            </Svg>
          </button>
          <button className="absolute right-0 top-[348px] flex h-[50px] w-[30px] items-center justify-center border-y border-l border-[#6a6f73] bg-[#2d2f31]">
            <Svg w={11} h={17}>
              <path d="M1.500 1 9 8.500 1.500 16" stroke="#fff" strokeWidth="2.400" />
            </Svg>
          </button>
        </div>
      </div>
      <div className="flex h-[7px] shrink-0 bg-[#1e4585]">
        <div className="ml-[351px] w-[1217px] bg-[#1c4283]" />
      </div>
    </div>
  );
}

/* ---------- desktop taskbar ---------- */

const Slot = ({ children, className = "w-[75px]", bar }: Kids & { bar?: boolean }) => (
  <div className={"relative flex h-[60px] shrink-0 items-center justify-center " + className}>
    {children}
    {bar && <span className="absolute bottom-0 left-[7px] h-[3px] w-[61px] bg-[#0078d7]" />}
  </div>
);

function Taskbar() {
  return (
    <div className="flex h-[60px] items-center bg-gradient-to-r from-[#d5d6d8] via-[#d5d5d6] to-[#dbd9db] text-black">
      <Slot className="w-[72px]">
        <Svg w={24} h={24}>
          <path d="m0 3 11-1.500V11.500H0zM11.800 1.300 24 0v11.500H11.800zM0 12.300h11V22.500L0 21zM11.800 12.300H24V24l-12.200-1.400z" fill="#000" />
        </Svg>
      </Slot>
      <Slot className="w-[72px]">
        <Svg w={34} h={34}>
          <circle cx="20" cy="13.500" r="12" stroke="#000" strokeWidth="3.200" />
          <path d="M11.500 22 1.800 31.800" stroke="#000" strokeWidth="4" strokeLinecap="round" />
        </Svg>
      </Slot>
      <Slot className="w-[72px]">
        <Svg w={24} h={24}>
          <path d="M.5 0v3.500h15V0M.5 6.500h15v10H.5zM.5 23.500v-3.500h15v3.500M22.500 0v6M22.500 12v12" stroke="#000" />
          <path d="M21 7h3v3h-3z" fill="#000" />
        </Svg>
      </Slot>
      <Slot className="ml-[3px] w-[76px]">
        <Svg w={36} h={36}>
          <defs>
            <linearGradient id="e1" x1="0" y1="0" x2="1" y2=".3">
              <stop offset="0" stopColor="#2ba8e8" />
              <stop offset=".5" stopColor="#2cc3d5" />
              <stop offset="1" stopColor="#6be34b" />
            </linearGradient>
            <linearGradient id="e2" x1="0" y1="0" x2=".4" y2="1">
              <stop offset="0" stopColor="#1565b8" />
              <stop offset="1" stopColor="#0a84e0" />
            </linearGradient>
          </defs>
          <path d="M1 14C3 5 10 0 18 0c11 0 18 8 18 16 0 6-5 8-9 8-5 0-7-2-6-3 4-5 0-11-7-11C8 10 3 13 0 18q0-2 1-4z" fill="url(#e1)" />
          <path d="M0 18C3 12 8 9 13 9c6 0 9 4 8.500 8-7-4-11 3-9 9 1.500 5 6 9 9.500 9.500Q10 38 4 30 0 25 0 18z" fill="url(#e2)" />
          <path d="M14 17c-4 7 2 13 9 13 5 0 9-3 10-3 1 0 0 2-2 4-3 3-7 5-12 4.800C8 34 8 22 14 17z" fill="#114a92" />
        </Svg>
      </Slot>
      <Slot>
        <Explorer w={32} h={27} />
        <span className="absolute bottom-0 left-[7px] h-[3px] w-[61px] bg-[#69abe3]">
          <span className="block h-[3px] w-[49px] bg-[#0078d7]" />
        </span>
      </Slot>
      <Slot>
        <Svg w={35} h={36}>
          <defs>
            <linearGradient id="st" x1="0" y1="0" x2=".6" y2="1">
              <stop offset="0" stopColor="#0867b5" />
              <stop offset="1" stopColor="#223a62" />
            </linearGradient>
          </defs>
          <path d="M0 4h35v28q0 4-4 4H4q-4 0-4-4z" fill="url(#st)" />
          <path d="M9 7V1.200h17V7" stroke="#36c5f5" strokeWidth="2" />
          <StoreTiles />
        </Svg>
      </Slot>
      <Slot>
        <Svg w={32} h={34}>
          <defs>
            <linearGradient id="m1" x1="1" y1="0" x2="0" y2="1">
              <stop offset="0" stopColor="#2a5cc0" />
              <stop offset="1" stopColor="#b07ae6" />
            </linearGradient>
            <linearGradient id="m2" x1="0" y1="0" x2="1" y2="1">
              <stop offset="0" stopColor="#2b6bd0" />
              <stop offset="1" stopColor="#45c8f5" />
            </linearGradient>
            <linearGradient id="m3" x1="0" y1="0" x2="1" y2="0">
              <stop offset="0" stopColor="#d09cf5" />
              <stop offset="1" stopColor="#6b3fa0" />
            </linearGradient>
          </defs>
          <path d="M16 0 2 8Q0 9 0 12v12l3 3 8-4V13l5-5z" fill="url(#m1)" />
          <path d="m12 2 4-2 14 8q2 1 2 4v12l-11-6v-6l-9-5z" fill="url(#m2)" />
          <path d="m3 26 8-4 5 3 5-4 1-5 10 5v3q0 2-2 3l-11 6.500q-3 1.500-6 0z" fill="url(#m3)" />
          <path d="m0 21 3-2 9 3-3 5-6 .5q-3-2-3-4z" fill="#2f6bd6" />
          <circle cx="16" cy="17" r="6" fill="#d6d6d8" />
        </Svg>
      </Slot>
      <Slot>
        <div className="relative flex h-[60px] w-[73px] items-center justify-center bg-[#efefef]">
          <Chrome s={36} />
          <span className="absolute inset-x-0 bottom-0 h-[3px] bg-[#0078d7]" />
        </div>
      </Slot>
      <Slot>
        <Svg w={36} h={32}>
          <path d="M2 0h32v23H2z" fill="#1583cf" />
          <path d="M0 23h36v2H0z" fill="#0b62ac" />
          <path d="M7 5q0-1 1-1h14q1 0 1 1v24q0 2-2 2H9q-2 0-2-2z" fill="#1797dd" />
          <path d="M7 5q0-1 1-1h14q1 0 1 1v13H7z" fill="#3cc8f4" />
          <path d="M7 27h16v4H7z" fill="#0b62ac" />
          <path d="M12 6h6" stroke="#0b7fbf" strokeWidth="1.500" />
        </Svg>
      </Slot>
      <Slot>
        <Eclipse s={36} />
      </Slot>
      <Slot>
        <Svg w={32} h={32}>
          <circle cx="16" cy="16" r="16" fill="#ff6c37" />
          <circle cx="23.500" cy="8.500" r="2.800" fill="#fff" />
          <path d="m21 11 3 2-9 9-7 4 1.500-3.500z" fill="#fff" />
          <path d="m13 19.500 7-6.500" stroke="#ff6c37" strokeWidth=".8" />
        </Svg>
      </Slot>
      <Slot bar>
        <Eclipse s={36} />
      </Slot>
      <Slot bar>
        <Svg w={32} h={32}>
          <defs>
            <linearGradient id="ph" x1="0" y1="0" x2="1" y2=".7">
              <stop offset="0" stopColor="#1488e0" />
              <stop offset="1" stopColor="#7a48b0" />
            </linearGradient>
            <clipPath id="pc">
              <rect width="32" height="32" rx="4" />
            </clipPath>
          </defs>
          <g clipPath="url(#pc)">
            <path d="M0 0h32v32H0z" fill="url(#ph)" />
            <path d="M-2 27 13 12.500q2.500-2 5 0L34 29v5H-2z" fill="#2fb9f3" />
            <path d="m2 32 12-11q2.500-2 5 0l11 11z" fill="#0c78d4" />
            <circle cx="23" cy="6" r="3" fill="#eaf3ff" />
          </g>
        </Svg>
      </Slot>

      <div className="ml-auto flex h-full items-center">
        <Svg w={18} h={11}>
          <path d="m1 10 8-8.500 8 8.500" stroke="#000" strokeWidth="1.500" />
        </Svg>
        <Svg w={17} h={23} className="ml-[20px]">
          <path d="M1 6.500h9.500q1 0 1 1v8q0 1-1 1H2q-1 0-1-1zM11.500 10 16 7v9l-4.500-3M2 2.500q5-2.500 11 0M2 20.500q5 2.500 11 0" stroke="#000" strokeWidth="1.300" />
        </Svg>
        <Svg w={25} h={17} className="ml-[14px]">
          <path d="M6 16q-5 0-5-4.500T6 7q1-6 7-6 5 0 6 5 5 .5 5 5t-5 5z" fill="#999" stroke="#000" strokeWidth="1.400" />
          <path d="M4 15.500 15 9l8 4q-1 2.500-4 2.500z" fill="#f0f0f0" />
        </Svg>
        <Svg w={15} h={25} className="ml-[16px]">
          <rect x="2.500" width="10" height="19" rx="1.500" fill="#000" />
          <path d="M.7 12v5q0 3.500 3.300 3.500h7q3.300 0 3.300-3.500v-5M7.500 21v3M4 24.200h7" stroke="#000" strokeWidth="1.300" />
        </Svg>
        <Svg w={25} h={25} className="ml-[17px]">
          <path d="M23.300 12V1L.700 4v17l12 1.800" stroke="#000" strokeWidth="1.300" />
          <path d="M7 10q4-5 8-1M15.500 6v4H12M15 14q-3 5-8 1M6.500 18v-4H10" stroke="#000" strokeWidth="1.200" />
          <circle cx="18.500" cy="19" r="5.700" fill="#2f74c0" />
        </Svg>
        <Svg w={23} h={14} className="ml-[13px]">
          <path d="M.7.700h20v12.600H.700zM22.300 4.500v5" stroke="#000" strokeWidth="1.300" />
          <path d="M2 2.500h9.500v9H2z" fill="#000" />
        </Svg>
        <Svg w={19} h={19} className="ml-[16px]">
          <path d="M1 18.500Q1 3 18 1.500M5.500 18.500Q5.500 8 18 6M10 18.500q0-7 8-8" stroke="#333" strokeWidth="1.300" />
          <circle cx="16.500" cy="17" r="2" fill="#000" />
        </Svg>
        <Svg w={23} h={20} className="ml-[14px]">
          <path d="M1 7h3.500L9 2v16l-4.500-5H1zM12.500 7q1.800 3 0 6M16 5q3 5 0 10M19.500 3q4.500 7 0 14" stroke="#000" strokeWidth="1.300" />
        </Svg>
        <Fit w={33} className="ml-[17px] text-[17px]">
          ENG
        </Fit>
        <div className="ml-[20px] flex w-[94px] flex-col items-center text-[17px] leading-[28px]">
          <Fit w={43}>22:39</Fit>
          <Fit w={93}>06-11-2023</Fit>
        </div>
        <div className="relative ml-[28px] h-[42px] w-[36px]">
          <Svg w={24} h={25} className="mt-[9px]">
            <path d="M0 0h24v19h-8l-6 6-4-6H0z" fill="#000" />
            <path d="M5 5.500h14M5 9.500h14M5 13.500h14" stroke="#ddd" strokeWidth="1.200" />
          </Svg>
          <span className="absolute left-[11px] top-[20px] flex size-[25px] items-center justify-center rounded-full border border-[#777] bg-[#d5d5d6]/90 text-[15px] font-semibold leading-none">
            2
          </span>
        </div>
        <span className="ml-[18px] h-full w-[2px] bg-[#aaa9ab]" />
        <span className="w-[6px]" />
      </div>
    </div>
  );
}

export default function App() {
  return (
    <div className="h-[1080px] w-[1920px] overflow-hidden bg-white font-['Open_Sans',sans-serif]">
      <TabStrip />
      <Toolbar />
      <Bookmarks />
      <ShareBar />
      <Stage />
      <Taskbar />
    </div>
  );
}
